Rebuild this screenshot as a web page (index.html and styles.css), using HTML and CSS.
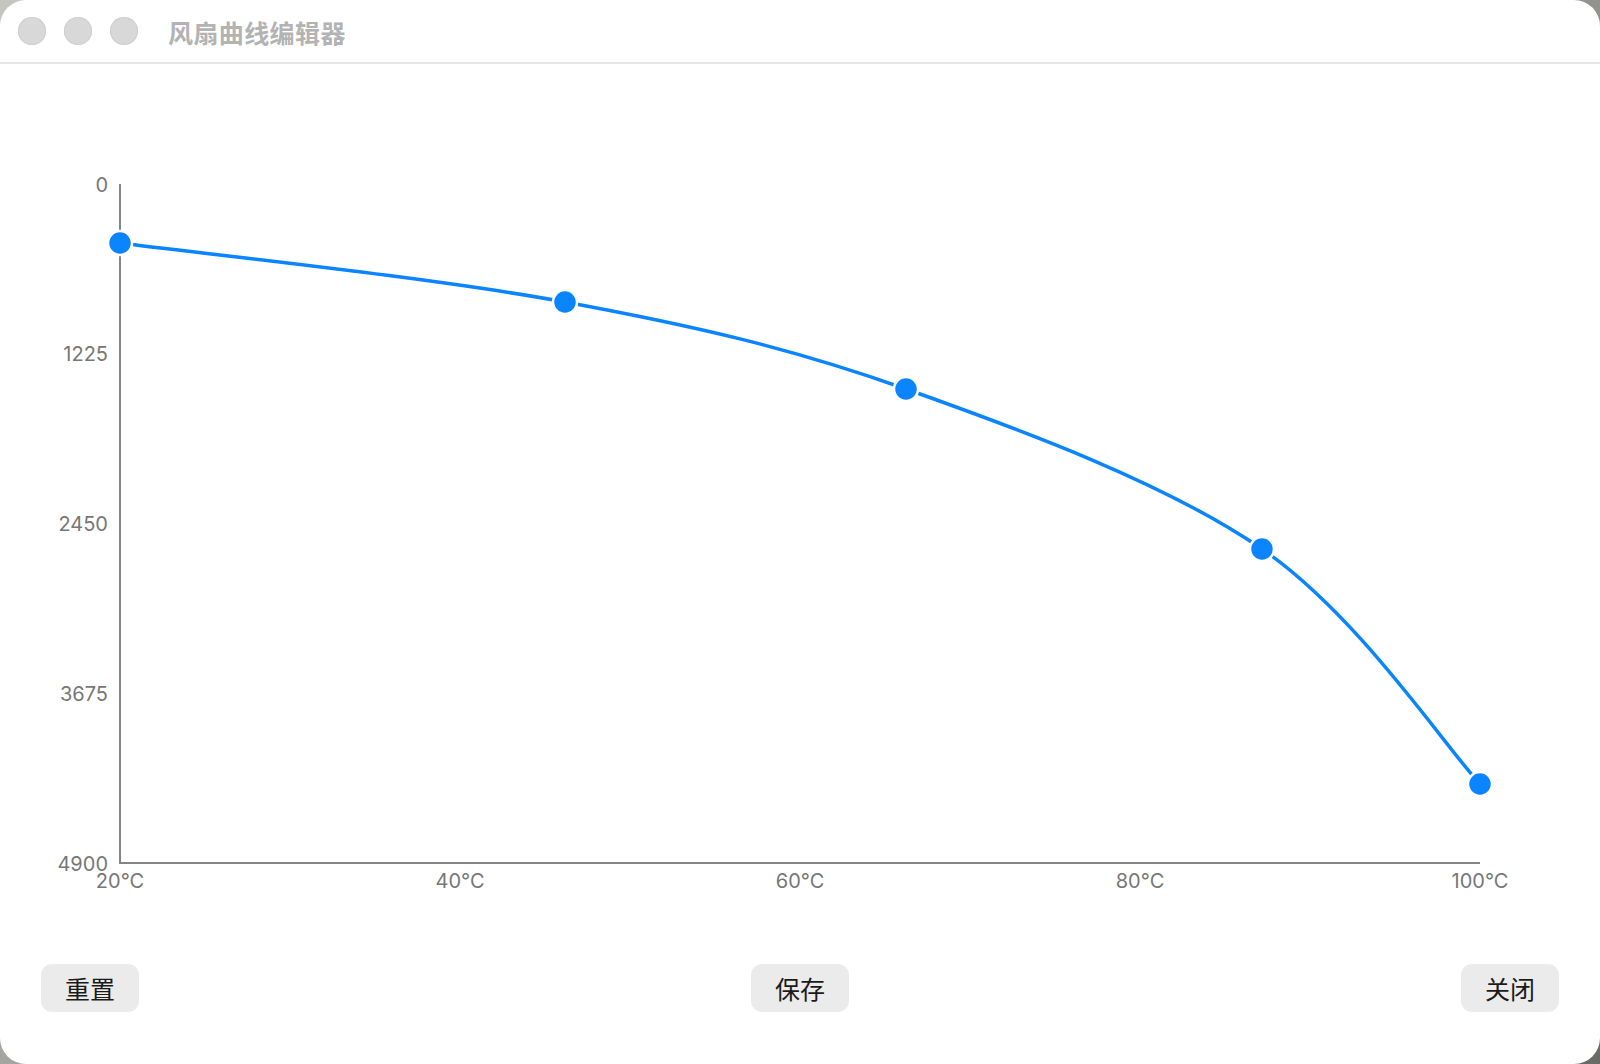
FILE: index.html
```html
<!DOCTYPE html>
<html lang="zh">
<head>
<meta charset="utf-8">
<title>风扇曲线编辑器</title>
<link rel="stylesheet" href="styles.css">
</head>
<body>
<div class="window">
  <div class="titlebar">
    <div class="lights">
      <span class="light"></span>
      <span class="light"></span>
      <span class="light"></span>
    </div>
    <div class="title">风扇曲线编辑器</div>
  </div>
  <div class="chart">
    <svg class="plot" width="1600" height="876" viewBox="0 64 1600 876" xmlns="http://www.w3.org/2000/svg">
      <g class="axis">
        <line x1="120" y1="184" x2="120" y2="863"/>
        <line x1="119" y1="863" x2="1480" y2="863"/>
      </g>
      <g class="ylabels">
        <text x="108" y="185">0</text>
        <text x="108" y="354">1225</text>
        <text x="108" y="524">2450</text>
        <text x="108" y="694">3675</text>
        <text x="108" y="864">4900</text>
      </g>
      <g class="xlabels">
        <text x="120" y="881">20°C</text>
        <text x="460" y="881">40°C</text>
        <text x="800" y="881">60°C</text>
        <text x="1140" y="881">80°C</text>
        <text x="1480" y="881">100°C</text>
      </g>
      <path class="curve" d="M120,243 C194.2,252.8 434,277.7 565,302 C696,326.3 789.8,347.8 906,389 C1022.2,430.2 1166.3,483.2 1262,549 C1357.7,614.8 1443.7,744.8 1480,784"/>
      <g class="points">
        <circle cx="120" cy="243" r="12"/>
        <circle cx="565" cy="302" r="12"/>
        <circle cx="906" cy="389" r="12"/>
        <circle cx="1262" cy="549" r="12"/>
        <circle cx="1480" cy="784" r="12"/>
      </g>
    </svg>
  </div>
  <div class="actions">
    <button class="btn">重置</button>
    <button class="btn">保存</button>
    <button class="btn">关闭</button>
  </div>
</div>
</body>
</html>
```

FILE: styles.css
```css
html, body {
  margin: 0;
  padding: 0;
  width: 1600px;
  height: 1064px;
  overflow: hidden;
}
body {
  background: linear-gradient(135deg, #c6c6c0 0%, #9c9c98 50%, #6a6a66 100%);
  font-family: "Noto Sans CJK SC", "Noto Sans", sans-serif;
}
.window {
  width: 1600px;
  height: 1064px;
  background: #ffffff;
  border-radius: 26px;
  display: flex;
  flex-direction: column;
  overflow: hidden;
}
.titlebar {
  height: 62px;
  flex: 0 0 62px;
  border-bottom: 2px solid #e5e5e5;
  display: flex;
  align-items: center;
  padding-left: 18px;
  box-sizing: content-box;
}
.lights {
  display: flex;
  gap: 18px;
}
.light {
  width: 28px;
  height: 28px;
  border-radius: 50%;
  background: #d8d8d8;
  box-shadow: inset 0 0 0 1px #d0d0d0;
}
.title {
  margin-left: 30px;
  margin-top: 2px;
  font-size: 25px;
  font-weight: 700;
  color: #b3b3b3;
  line-height: 1;
  letter-spacing: 0.4px;
}
.chart {
  height: 876px;
  flex: 0 0 876px;
}
.plot {
  display: block;
}
.axis line {
  stroke: #858585;
  stroke-width: 2;
}
.ylabels text, .xlabels text {
  font-family: Inter, "Liberation Sans", sans-serif;
  font-size: 20px;
  fill: #777777;
  dominant-baseline: central;
}
.ylabels text {
  text-anchor: end;
}
.xlabels text {
  text-anchor: middle;
}
.curve {
  fill: none;
  stroke: #0a84ff;
  stroke-width: 3.5;
}
.points circle {
  fill: #0a84ff;
  stroke: #ffffff;
  stroke-width: 2.5;
}
.actions {
  display: flex;
  justify-content: space-between;
  padding: 24px 41px 0;
}
.btn {
  width: 98px;
  height: 48px;
  border: none;
  border-radius: 11px;
  background: #ebebeb;
  font-family: "Noto Sans CJK SC", "Noto Sans", sans-serif;
  font-size: 25px;
  font-weight: 400;
  color: #1a1a1a;
  padding: 0;
  line-height: 48px;
}
```
